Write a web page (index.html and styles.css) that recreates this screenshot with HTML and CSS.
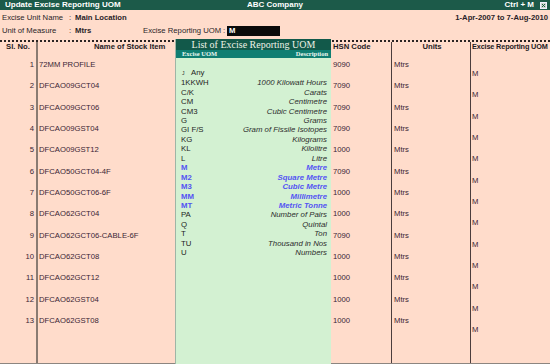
FILE: index.html
```html
<!DOCTYPE html>
<html>
<head>
<meta charset="utf-8">
<link rel="stylesheet" href="styles.css">
</head>
<body>
<div class="screen">
  <div class="titlebar">
    <div class="tb-left">Update Excise Reporting UOM</div>
    <div class="tb-center">ABC Company</div>
    <div class="tb-right">Ctrl + M <span class="closebox"><svg width="7" height="7" viewBox="0 0 7 7"><rect x="0.5" y="0.5" width="6" height="6" fill="#cfd8d0" stroke="#eef" stroke-width="1"/><path d="M2 2 L5 5 M5 2 L2 5" stroke="#1b5a48" stroke-width="1"/></svg></span></div>
  </div>

  <div class="info">
    <div class="info-row">
      <span class="lbl">Excise Unit Name</span><span class="colon">:</span><span class="val">Main Location</span>
      <span class="period">1-Apr-2007 to 7-Aug-2010</span>
    </div>
    <div class="info-row">
      <span class="lbl">Unit of Measure</span><span class="colon">:</span><span class="val val-short">Mtrs</span>
      <span class="lbl2">Excise Reporting UOM</span><span class="colon2">:</span><span class="inputbox">M</span>
    </div>
  </div>

  <div class="table">
    <div class="row head">
      <div class="c c-sl">Sl. No.</div>
      <div class="c c-name"><span class="name-head">Name of Stock Item</span></div>
      <div class="c c-hsn">HSN Code</div>
      <div class="c c-units">Units</div>
      <div class="c c-uom">Excise Reporting UOM</div>
    </div>
    <div class="row"><div class="c c-sl">1</div><div class="c c-name">72MM PROFILE</div><div class="c c-hsn">9090</div><div class="c c-units">Mtrs</div><div class="c c-uom">M</div></div>
    <div class="row"><div class="c c-sl">2</div><div class="c c-name">DFCAO09GCT04</div><div class="c c-hsn">7090</div><div class="c c-units">Mtrs</div><div class="c c-uom">M</div></div>
    <div class="row"><div class="c c-sl">3</div><div class="c c-name">DFCAO09GCT06</div><div class="c c-hsn">7090</div><div class="c c-units">Mtrs</div><div class="c c-uom">M</div></div>
    <div class="row"><div class="c c-sl">4</div><div class="c c-name">DFCAO09GST04</div><div class="c c-hsn">7090</div><div class="c c-units">Mtrs</div><div class="c c-uom">M</div></div>
    <div class="row"><div class="c c-sl">5</div><div class="c c-name">DFCAO09GST12</div><div class="c c-hsn">1000</div><div class="c c-units">Mtrs</div><div class="c c-uom">M</div></div>
    <div class="row"><div class="c c-sl">6</div><div class="c c-name">DFCAO50GCT04-4F</div><div class="c c-hsn">7090</div><div class="c c-units">Mtrs</div><div class="c c-uom">M</div></div>
    <div class="row"><div class="c c-sl">7</div><div class="c c-name">DFCAO50GCT06-6F</div><div class="c c-hsn">1000</div><div class="c c-units">Mtrs</div><div class="c c-uom">M</div></div>
    <div class="row"><div class="c c-sl">8</div><div class="c c-name">DFCAO62GCT04</div><div class="c c-hsn">1000</div><div class="c c-units">Mtrs</div><div class="c c-uom">M</div></div>
    <div class="row"><div class="c c-sl">9</div><div class="c c-name">DFCAO62GCT06-CABLE-6F</div><div class="c c-hsn">7090</div><div class="c c-units">Mtrs</div><div class="c c-uom">M</div></div>
    <div class="row"><div class="c c-sl">10</div><div class="c c-name">DFCAO62GCT08</div><div class="c c-hsn">1000</div><div class="c c-units">Mtrs</div><div class="c c-uom">M</div></div>
    <div class="row"><div class="c c-sl">11</div><div class="c c-name">DFCAO62GCT12</div><div class="c c-hsn">1000</div><div class="c c-units">Mtrs</div><div class="c c-uom">M</div></div>
    <div class="row"><div class="c c-sl">12</div><div class="c c-name">DFCAO62GST04</div><div class="c c-hsn">1000</div><div class="c c-units">Mtrs</div><div class="c c-uom">M</div></div>
    <div class="row"><div class="c c-sl">13</div><div class="c c-name">DFCAO62GST08</div><div class="c c-hsn">1000</div><div class="c c-units">Mtrs</div><div class="c c-uom">M</div></div>
    <div class="row filler"><div class="c c-sl"></div><div class="c c-name"></div><div class="c c-hsn"></div><div class="c c-units"></div><div class="c c-uom"></div></div>
  </div>

  <div class="popup">
    <div class="pop-title">List of Excise Reporting UOM</div>
    <div class="pop-sub"><span>Excise UOM</span><span>Description</span></div>
    <ul class="pop-list">
      <li class="any"><span class="mark">J</span><span>Any</span></li>
      <li><span>1KKWH</span><em>1000 Kilowatt Hours</em></li>
      <li><span>C/K</span><em>Carats</em></li>
      <li><span>CM</span><em>Centimetre</em></li>
      <li><span>CM3</span><em>Cubic Centimetre</em></li>
      <li><span>G</span><em>Grams</em></li>
      <li><span>GI F/S</span><em>Gram of Fissile Isotopes</em></li>
      <li><span>KG</span><em>Kilograms</em></li>
      <li><span>KL</span><em>Kilolitre</em></li>
      <li><span>L</span><em>Litre</em></li>
      <li class="hl"><span>M</span><em>Metre</em></li>
      <li class="hl"><span>M2</span><em>Square Metre</em></li>
      <li class="hl"><span>M3</span><em>Cubic Metre</em></li>
      <li class="hl"><span>MM</span><em>Millimetre</em></li>
      <li class="hl"><span>MT</span><em>Metric Tonne</em></li>
      <li><span>PA</span><em>Number of Pairs</em></li>
      <li><span>Q</span><em>Quintal</em></li>
      <li><span>T</span><em>Ton</em></li>
      <li><span>TU</span><em>Thousand in Nos</em></li>
      <li><span>U</span><em>Numbers</em></li>
    </ul>
  </div>
</div>
</body>
</html>
```

FILE: styles.css
```css
* { box-sizing: border-box; }
html, body { margin: 0; padding: 0; }
body {
  width: 550px;
  height: 364px;
  overflow: hidden;
  background: #ffdccb;
  font-family: "Liberation Sans", Arial, sans-serif;
  font-size: 7.7px;
  color: #3a2535;
}
.screen {
  position: relative;
  width: 550px;
  height: 364px;
  display: flex;
  flex-direction: column;
}
.titlebar {
  height: 10px;
  background: #1c5a49;
  color: #ffffff;
  font-weight: bold;
  font-size: 8px;
  line-height: 10px;
  display: grid;
  grid-template-columns: 1fr auto 1fr;
}
.tb-left { padding-left: 5px; }
.tb-center { text-align: center; }
.tb-right {
  display: flex;
  justify-content: flex-end;
  align-items: center;
  gap: 6px;
  padding-right: 3px;
}
.closebox { display: flex; }

.info {
  height: 30px;
  padding-top: 3px;
  display: flex;
  flex-direction: column;
  gap: 3px;
}
.info-row {
  height: 10px;
  line-height: 10px;
  display: flex;
  align-items: center;
  color: #2a1e28;
}
.lbl { width: 69px; padding-left: 2px; }
.colon { width: 6px; }
.val { font-weight: bold; }
.val-short { width: 68px; }
.period { margin-left: auto; font-weight: bold; padding-right: 2px; }
.lbl2 { width: 80px; }
.colon2 { width: 4px; }
.inputbox {
  width: 53px;
  height: 10px;
  background: #0a0a0a;
  color: #fff;
  font-weight: bold;
  padding-left: 2px;
  line-height: 10px;
}

.table {
  flex: 1;
  display: flex;
  flex-direction: column;
  border-top: 2px dotted #2a2424;
  border-bottom: 1px solid #8c8580;
}
.row {
  display: flex;
  height: 21.33px;
}
.row.head {
  height: 11px;
  line-height: 9px;
  font-weight: bold;
  color: #1e1a1e;
}
.row.filler { flex: 1; height: auto; }
.c { line-height: 10px; white-space: nowrap; }
.row:not(.head) .c { padding-top: 7px; }
.c-sl {
  width: 38px;
  border-right: 2px solid #8a7b72;
  text-align: right;
  padding-right: 2px;
}
.head .c-sl { text-align: center; padding-right: 0; }
.c-name { width: 293px; padding-left: 1px; }
.name-head { padding-left: 55px; }
.c-hsn { width: 60px; padding-left: 2px; }
.c-units {
  width: 79px;
  border-left: 1px solid #4b3d3d;
  padding-left: 2px;
}
.head .c-units { text-align: center; }
.c-uom {
  width: 80px;
  border-left: 1px solid #4b3d3d;
  padding-left: 1px;
}
.head .c-uom { font-size: 7.3px; letter-spacing: -0.15px; }
.row:not(.head) .c-uom { padding-top: 16px; }

.popup {
  position: absolute;
  left: 175px;
  top: 39px;
  width: 156px;
  height: 325px;
  background: #d3f1d2;
  border-left: 1px solid #9fb5a6;
  display: flex;
  flex-direction: column;
}
.pop-title {
  height: 11px;
  background: #12594a;
  color: #eef2e6;
  font-family: "Liberation Serif", "Times New Roman", serif;
  font-size: 10px;
  line-height: 11px;
  text-align: center;
}
.pop-sub {
  height: 8px;
  background: #0f7e72;
  color: #e8f6f0;
  font-family: "Liberation Serif", "Times New Roman", serif;
  font-weight: bold;
  font-size: 6.5px;
  line-height: 8px;
  display: flex;
  justify-content: space-between;
  padding: 0 3px 0 6px;
}
.pop-list {
  list-style: none;
  margin: 0;
  padding: 10px 4px 0 5px;
  color: #1e1e1e;
}
.pop-list li {
  height: 9.44px;
  line-height: 9.44px;
  display: flex;
  justify-content: space-between;
  align-items: baseline;
  font-size: 7.8px;
}
.pop-list em { font-style: italic; color: #2c2c2c; }
.pop-list li.any { justify-content: flex-start; height: 10.3px; line-height: 10.3px; }
.mark { font-size: 5px; width: 10px; padding-left: 1px; }
.pop-list li.hl span, .pop-list li.hl em { color: #5454f2; font-weight: bold; }
```
